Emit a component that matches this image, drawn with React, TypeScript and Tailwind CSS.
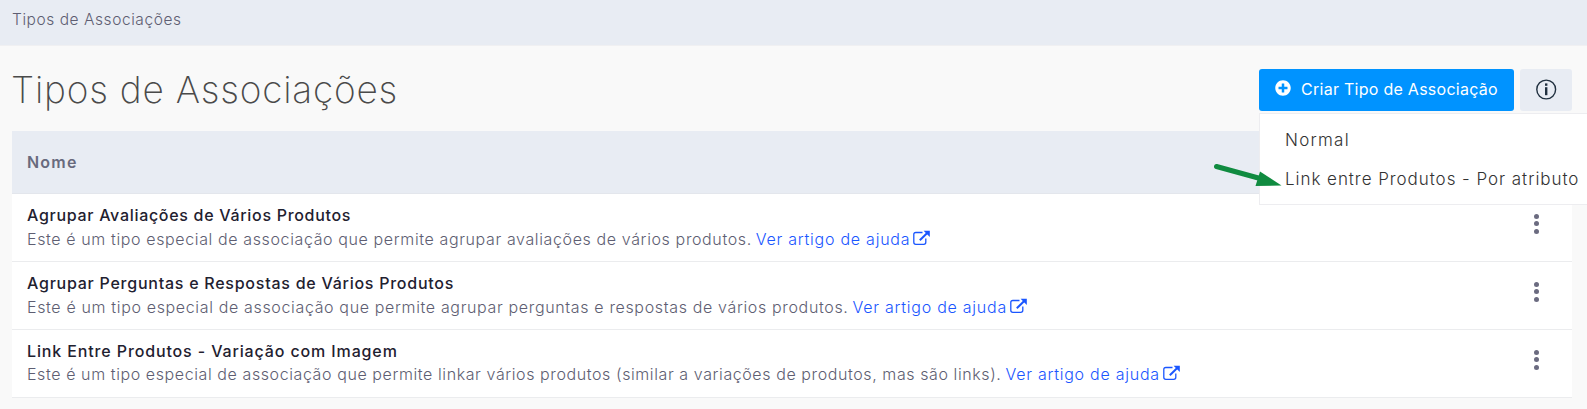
import { FaPlusCircle } from 'react-icons/fa';

const rows = [
  {
    name: 'Agrupar Avaliações de Vários Produtos',
    nameTracking: 'tracking-[0.7px]',
    desc: 'Este é um tipo especial de associação que permite agrupar avaliações de vários produtos.',
    descTracking: 'tracking-[0.622px]',
    descLeading: 'leading-6',
  },
  {
    name: 'Agrupar Perguntas e Respostas de Vários Produtos',
    nameTracking: 'tracking-[0.75px]',
    desc: 'Este é um tipo especial de associação que permite agrupar perguntas e respostas de vários produtos.',
    descTracking: 'tracking-[0.65px]',
    descLeading: 'leading-6',
  },
  {
    name: 'Link Entre Produtos - Variação com Imagem',
    nameTracking: 'tracking-[0.87px]',
    desc: 'Este é um tipo especial de associação que permite linkar vários produtos (similar a variações de produtos, mas são links).',
    descTracking: 'tracking-[0.592px]',
    descLeading: 'leading-[22px]',
  },
];

function ExternalIcon() {
  return (
    <svg className="ml-[3px] -mt-1.5 inline-block h-4 w-[17px]" viewBox="0 0 17 16" fill="none" stroke="currentColor">
      <path d="M9.5 2.5H2.8Q.8 2.5 .8 4.5V12.3Q.8 14.3 2.8 14.3H10.8Q12.8 14.3 12.8 12.3V8.5" strokeWidth="1.3" />
      <path d="M6.8 10.3L14.5 2.8" strokeWidth="2" />
      <path d="M10.6.8H16.8V7Z" fill="currentColor" stroke="none" />
    </svg>
  );
}

export default function App() {
  return (
    <div className="relative h-[409px] overflow-hidden whitespace-nowrap bg-[#f9f9f9] font-['Inter',sans-serif] text-base font-light text-[#5e5e72]">
      <header className="h-[46px] border-b border-[#f0f0f2] bg-[#e8ecf3] pl-3 pt-[7px]">
        <span className="block text-[15.5px] leading-[25px] tracking-[0.56px]">Tipos de Associações</span>
      </header>

      <main className="pl-3 pr-[15px]">
        <div className="flex h-[85px] items-start justify-between pt-[23px]">
          <h1 className="-ml-px text-[37px] font-extralight leading-[42px] tracking-[0.78px] text-[#4a4a4a]">
            Tipos de Associações
          </h1>
          <div className="flex gap-1.5">
            <div className="relative">
              <button className="flex h-[42px] w-[255px] items-center rounded-[3px] bg-[#0093ff] pl-4 text-white">
                <FaPlusCircle className="-mt-1 size-4" />
                <span className="-mt-0.5 ml-2.5 font-normal tracking-[0.27px]">Criar Tipo de Associação</span>
              </button>
              <div className="absolute left-0 top-11 z-10 h-[92px] w-[340px] border border-[#ededf0] bg-white pl-[25px] pt-2 text-[17px] text-[#333]">
                <div className="h-[39px] leading-[37px] tracking-[1.25px]">Normal</div>
                <div className="h-[39px] leading-[37px] tracking-[0.95px]">Link entre Produtos - Por atributo</div>
              </div>
            </div>
            <button className="flex h-[42px] w-[52px] items-center justify-center rounded-[3px] bg-[#e8ecf3] text-[#20303f]">
              <svg className="-mt-0.5 size-[21px]" viewBox="0 0 21 21" fill="none" stroke="currentColor">
                <circle cx="10.2" cy="10.5" r="9.4" strokeWidth="1.4" />
                <path d="M10.2 8.2V16.2" strokeWidth="2.4" />
                <path d="M10.2 4.4V6.8" strokeWidth="2.4" />
              </svg>
            </button>
          </div>
        </div>

        <section className="bg-white">
          <div className="flex h-[63px] items-center border-b border-[#e3e6ec] bg-[#e8ecf3] pl-[15px] font-semibold tracking-[1.2px] text-[#686a7d]">
            Nome
          </div>
          {rows.map((row) => (
            <div key={row.name} className="flex h-[68px] items-start justify-between border-b border-[#ebecee] pl-[15px]">
              <div className="pt-[9px] leading-6">
                <div className={`font-medium text-[#1f2130] ${row.nameTracking}`}>{row.name}</div>
                <div className={row.descLeading}>
                  <span className={row.descTracking}>{row.desc}</span>
                  <a className="ml-1 tracking-[0.75px] text-[#1a56ff]">Ver artigo de ajuda</a>
                  <span className="text-[#1a56ff]"><ExternalIcon /></span>
                </div>
              </div>
              <div className="mr-[33px] mt-[19.5px] flex flex-col gap-[2.5px]">
                <i className="size-[5px] rounded-full bg-[#6b6b80]" />
                <i className="size-[5px] rounded-full bg-[#6b6b80]" />
                <i className="size-[5px] rounded-full bg-[#6b6b80]" />
              </div>
            </div>
          ))}
        </section>
      </main>

      <svg className="absolute left-[1208px] top-[155px] z-20 h-10 w-[84px]" viewBox="0 0 84 40" fill="#108b40">
        <path d="M8.5 11.5L54 24" stroke="#108b40" strokeWidth="5" strokeLinecap="round" />
        <path d="M52 16.5L73.5 30.5L47.5 31Z" />
      </svg>
    </div>
  );
}
